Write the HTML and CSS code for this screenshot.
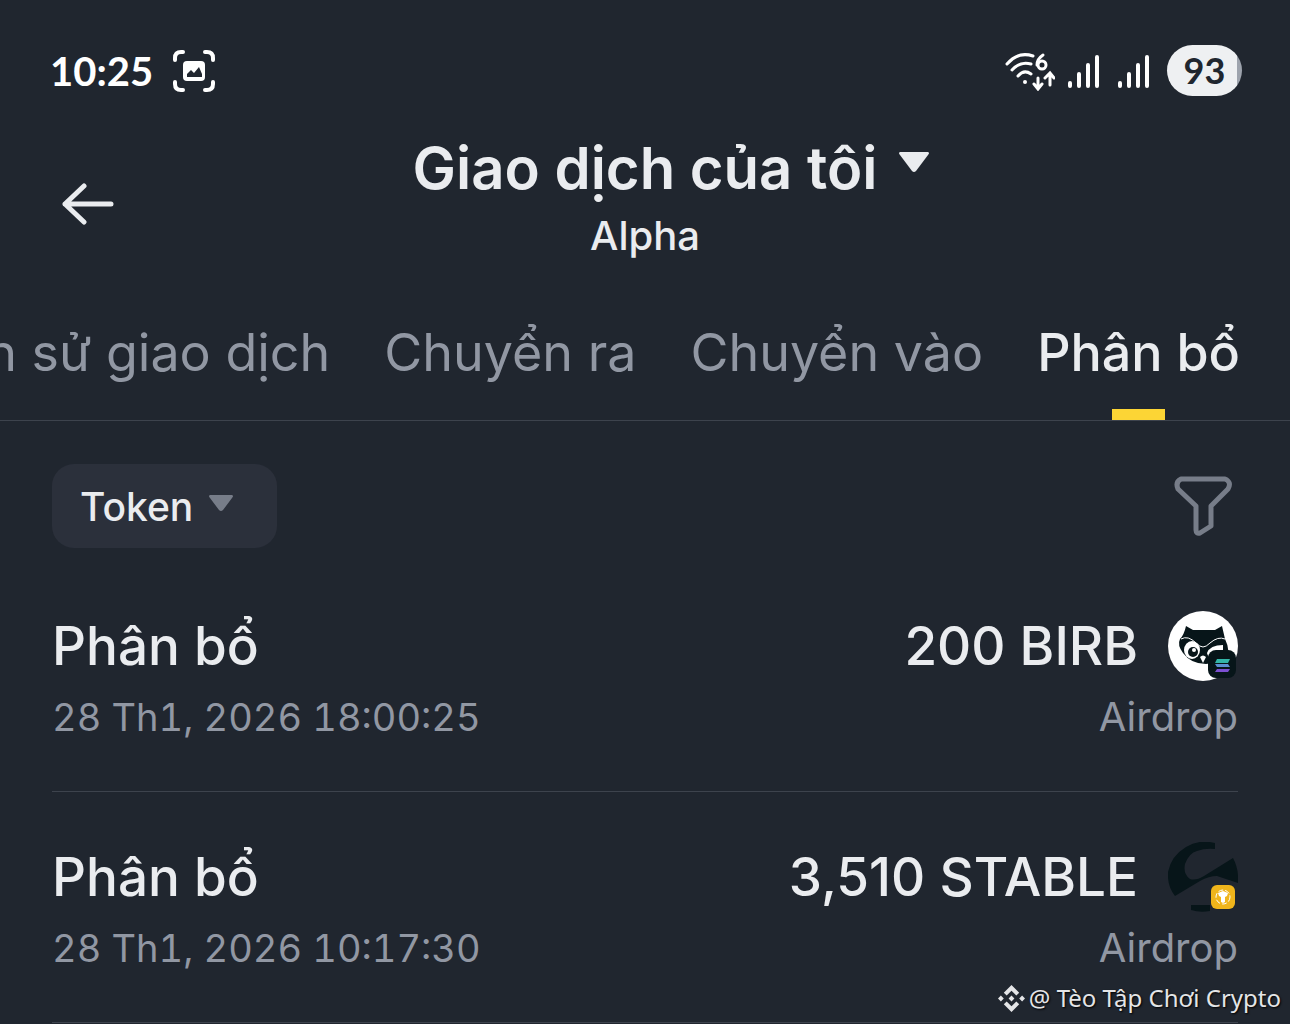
FILE: index.html
```html
<!DOCTYPE html>
<html lang="vi">
<head>
    <meta charset="utf-8">
    <meta name="viewport" content="width=device-width, initial-scale=1">
    <title>Giao dịch của tôi</title>
    <link rel="stylesheet" href="styles.css">
</head>
<body>
    <div class="status-bar">
        <div class="status-left">
            <span class="clock">10:25</span>
            <svg class="capture-icon" viewBox="0 0 42 42" fill="none" stroke="#fff" stroke-width="4" stroke-linecap="round">
                <path d="M2 10V8q0-6 6-6h2M32 2h2q6 0 6 6v2M40 32v2q0 6-6 6h-2M10 40H8q-6 0-6-6v-2"/>
                <rect x="10" y="11" width="22" height="20" rx="4" fill="#fff" stroke="none"/>
                <path d="M14 27v-3l4-4 3 3 5-6 3 7v3z" fill="#20262f" stroke="none"/>
            </svg>
        </div>
        <div class="status-right">
            <svg class="wifi-icon" viewBox="0 0 50 40" fill="none" stroke="#fff" stroke-width="3" stroke-linecap="round">
                <path d="M2 13Q13 0 28 5M7 19q8-9 19-6M13 25q6-7 13-2"/>
                <circle cx="20" cy="31" r="2" fill="#fff" stroke="none"/>
                <path d="M38 4q-6 4-6 10M33 27v10M29 33l4 5 4-5M45 34v-11M40 27l5-5 4 5"/>
                <circle cx="37" cy="14" r="4"/>
            </svg>
            <svg class="signal-icon" viewBox="0 0 34 36" stroke="#fff" stroke-width="4" stroke-linecap="round">
                <path d="M3 30v3M12 21v12M21 12v21M30 4v29"/>
            </svg>
            <svg class="signal-icon" viewBox="0 0 34 36" stroke="#fff" stroke-width="4" stroke-linecap="round">
                <path d="M3 30v3M12 21v12M21 12v21M30 4v29"/>
            </svg>
            <span class="battery">93</span>
        </div>
    </div>

    <header class="header">
        <button class="back-btn" aria-label="Quay lại">
            <svg viewBox="0 0 52 42" fill="none" stroke="#eaecef" stroke-width="5" stroke-linecap="round" stroke-linejoin="round">
                <path d="M49 21H3M22 3L3 21l19 18"/>
            </svg>
        </button>
        <div class="heading">
            <h1>
                <button class="title-btn" aria-haspopup="true">
                    Giao dịch của tôi
                    <svg class="title-caret" viewBox="0 0 30 20"><path d="M1 0h28q2 1 0 3L17 19q-2 2-4 0L1 3q-2-2 0-3z" fill="#eaecef"/></svg>
                </button>
            </h1>
            <p>Alpha</p>
        </div>
    </header>

    <nav class="tabs" role="tablist">
        <button class="tab" role="tab">Lịch sử giao dịch</button>
        <button class="tab" role="tab">Chuyển ra</button>
        <button class="tab" role="tab">Chuyển vào</button>
        <button class="tab active" role="tab" aria-selected="true">Phân bổ</button>
    </nav>

    <main>
        <div class="filters">
            <div class="token-filter">
                <select id="token" aria-label="Token">
                    <option>Token</option>
                </select>
                <svg class="token-caret" viewBox="0 0 24 16"><path d="M1 0h22q2 1 0 3l-9 12q-2 2-4 0L1 3q-2-2 0-3z" fill="#777d89"/></svg>
            </div>
            <button class="filter-btn" aria-label="Bộ lọc">
                <svg viewBox="0 0 58 62" fill="none" stroke="#777d89" stroke-width="5" stroke-linejoin="round">
                    <path d="M7 4h44q7 3 3 10L37 31v20l-11 7q-4 1-4-3V31L4 14Q1 7 7 4z"/>
                </svg>
            </button>
        </div>

        <ul class="history">
            <li class="entry">
                <div class="entry-main">
                    <span>Phân bổ</span>
                    <span class="amount">200 BIRB</span>
                    <svg class="coin" viewBox="0 0 70 70">
                        <circle cx="35" cy="35" r="35" fill="#fff"/>
                        <path d="M18 15l7 4h22l7-4 3 13q6 12 1 22l-20 3q-15 0-23-11Q9 34 12 28q4-4 6-13z" fill="#071519"/>
                        <path d="M13 28q7-4 15 4 4 4 7 4 3 0 7-4 8-7 15-4" fill="none" stroke="#fff" stroke-width="1"/>
                        <ellipse cx="24" cy="39" rx="8" ry="9" fill="#fff"/>
                        <path d="M39 42q3-8 16-8v8l-10 6q-5-1-6-6z" fill="#fff"/>
                        <circle cx="25" cy="41" r="5" fill="#071519"/>
                        <circle cx="26" cy="39" r="2" fill="#fff"/>
                        <path d="M32 46q3-3 6 0l-3 6z" fill="#fff"/>
                        <rect x="40" y="39" width="28" height="28" rx="8" fill="#071519"/>
                        <path d="M49 48h13l-2 4H47z" fill="#33b6a8"/>
                        <path d="M47 53h13l2 3H49z" fill="#5b8fd0"/>
                        <path d="M49 58h13l-2 3H47z" fill="#7b4fd0"/>
                    </svg>
                </div>
                <div class="entry-sub">
                    <time>28 Th1, 2026 18:00:25</time>
                    <span>Airdrop</span>
                </div>
            </li>
            <li class="entry">
                <div class="entry-main">
                    <span>Phân bổ</span>
                    <span class="amount">3,510 STABLE</span>
                    <svg class="coin" viewBox="0 0 70 70">
                        <path d="M47 1Q31-3 18 5 3 14 0 30q-1 14 7 24l25-15q9-5 17-5l21 7q1-14-5-25L36 34q-8 5-14 3-7-5-5-15 4-11 12-13 8-3 18-2z" fill="#071519"/>
                        <path d="M23 63h19v6q-10 2-19-1z" fill="#071519"/>
                        <rect x="43" y="43" width="24" height="24" rx="6" fill="#f0b51b"/>
                        <circle cx="55" cy="55" r="7" fill="none" stroke="#fff" stroke-width="1" stroke-dasharray="5 2"/>
                        <path d="M50 51l5-2 5 2-1 3-2 1v5l-2 1-2-1v-5l-2-1z" fill="#fff"/>
                    </svg>
                </div>
                <div class="entry-sub">
                    <time>28 Th1, 2026 10:17:30</time>
                    <span>Airdrop</span>
                </div>
            </li>
        </ul>
    </main>

    <div class="watermark">
        <svg viewBox="0 0 28 28" fill="#e4e5e7">
            <path d="M14 0l8 8-3 3-5-5-5 5-3-3zM14 28l8-8-3-3-5 5-5-5-3 3zM14 11l3 3-3 3-3-3zM3 11l3 3-3 3-3-3zM25 11l3 3-3 3-3-3z"/>
        </svg>
        <span>@ Tèo Tập Chơi Crypto</span>
    </div>
</body>
</html>
```
FILE: styles.css
```css
* {
    box-sizing: border-box;
}
body {
    font-family: Inter, "Noto Sans", sans-serif;
    margin: 0;
    min-height: 100vh;
    background: #20262f;
    color: #eaecef;
    position: relative;
    overflow-x: hidden;
}
button, select {
    font: inherit;
    color: inherit;
    background: none;
    border: none;
    padding: 0;
    cursor: pointer;
}
svg {
    display: block;
    flex: none;
}
.status-bar {
    display: flex;
    justify-content: space-between;
    align-items: center;
    padding: 45px 48px 0 50px;
}
.status-left, .status-right {
    display: flex;
    align-items: center;
}
.status-left {
    gap: 20px;
}
.status-right {
    gap: 16px;
}
.clock {
    font-family: Lato, sans-serif;
    font-size: 40px;
    font-weight: 700;
    color: #fff;
}
.capture-icon {
    width: 42px;
    height: 42px;
}
.wifi-icon {
    width: 50px;
    height: 40px;
    margin-right: -4px;
}
.signal-icon {
    width: 34px;
    height: 36px;
}
.battery {
    width: 75px;
    height: 51px;
    border-radius: 26px;
    background: linear-gradient(to right, #eef0f2 70px, #9da3ad 70px);
    color: #20262f;
    font-family: Lato, sans-serif;
    font-size: 36px;
    font-weight: 700;
    line-height: 51px;
    text-align: center;
}
.header {
    display: grid;
    grid-template-columns: 52px 1fr 52px;
    align-items: center;
    padding: 36px 62px 0;
}
.back-btn svg {
    width: 52px;
    height: 42px;
}
.heading {
    padding-bottom: 8px;
    text-align: center;
}
h1 {
    margin: 0;
    font-size: 58px;
    font-weight: 600;
}
.title-btn {
    display: inline-flex;
    align-items: center;
    gap: 22px;
    padding-left: 52px;
    line-height: 72px;
    white-space: nowrap;
}
.title-caret {
    width: 30px;
    height: 20px;
    margin-bottom: 12px;
}
.heading p {
    margin: 0;
    font-size: 40px;
    font-weight: 500;
    line-height: 64px;
}
.tabs {
    display: flex;
    justify-content: flex-end;
    gap: 54px;
    margin-top: 24px;
    padding-right: 50px;
    border-bottom: 1px solid #3d434d;
    overflow: hidden;
}
.tab {
    flex: none;
    display: flex;
    flex-direction: column;
    align-items: center;
    height: 120px;
    padding-top: 20px;
    font-size: 52px;
    line-height: 66px;
    color: #9197a3;
    white-space: nowrap;
}
.tab.active {
    color: #eaecef;
    font-weight: 500;
}
.tab.active::after {
    content: "";
    width: 53px;
    height: 11px;
    margin-top: auto;
    background: #fcd535;
}
main {
    padding: 43px 52px 0;
}
.filters {
    display: flex;
    justify-content: space-between;
    align-items: center;
}
.token-filter {
    display: grid;
    align-items: center;
    border-radius: 22px;
    background: #2b303b;
}
.token-filter select {
    grid-area: 1 / 1;
    appearance: none;
    height: 84px;
    padding: 0 83px 0 28px;
    font-size: 39px;
    font-weight: 500;
}
.token-caret {
    grid-area: 1 / 1;
    justify-self: end;
    width: 24px;
    height: 16px;
    margin: 0 44px 6px 0;
    pointer-events: none;
}
.filter-btn {
    padding-right: 6px;
}
.filter-btn svg {
    width: 58px;
    height: 62px;
}
.history {
    list-style: none;
    margin: 13px 0 0;
    padding: 0;
}
.entry {
    padding: 49px 0 48px;
    border-bottom: 1px solid #3d434d;
}
.entry-main, .entry-sub {
    display: flex;
    justify-content: space-between;
    align-items: center;
}
.entry-main {
    gap: 30px;
    font-size: 53px;
    font-weight: 500;
    line-height: 72px;
}
.amount {
    margin-left: auto;
}
.coin {
    width: 70px;
    height: 70px;
}
.entry-sub {
    margin-top: 9px;
    font-size: 40px;
    line-height: 52px;
    color: #9197a3;
}
.entry-sub time {
    font-size: 38px;
    font-variant-numeric: tabular-nums;
}
.watermark {
    position: absolute;
    right: 9px;
    bottom: 8px;
    display: flex;
    align-items: center;
    gap: 4px;
    font-family: "Noto Sans", sans-serif;
    font-size: 24px;
    line-height: 36px;
    color: #e4e5e7;
    text-shadow: 1px 1px 2px #000;
}
.watermark svg {
    width: 27px;
    height: 27px;
}
```
